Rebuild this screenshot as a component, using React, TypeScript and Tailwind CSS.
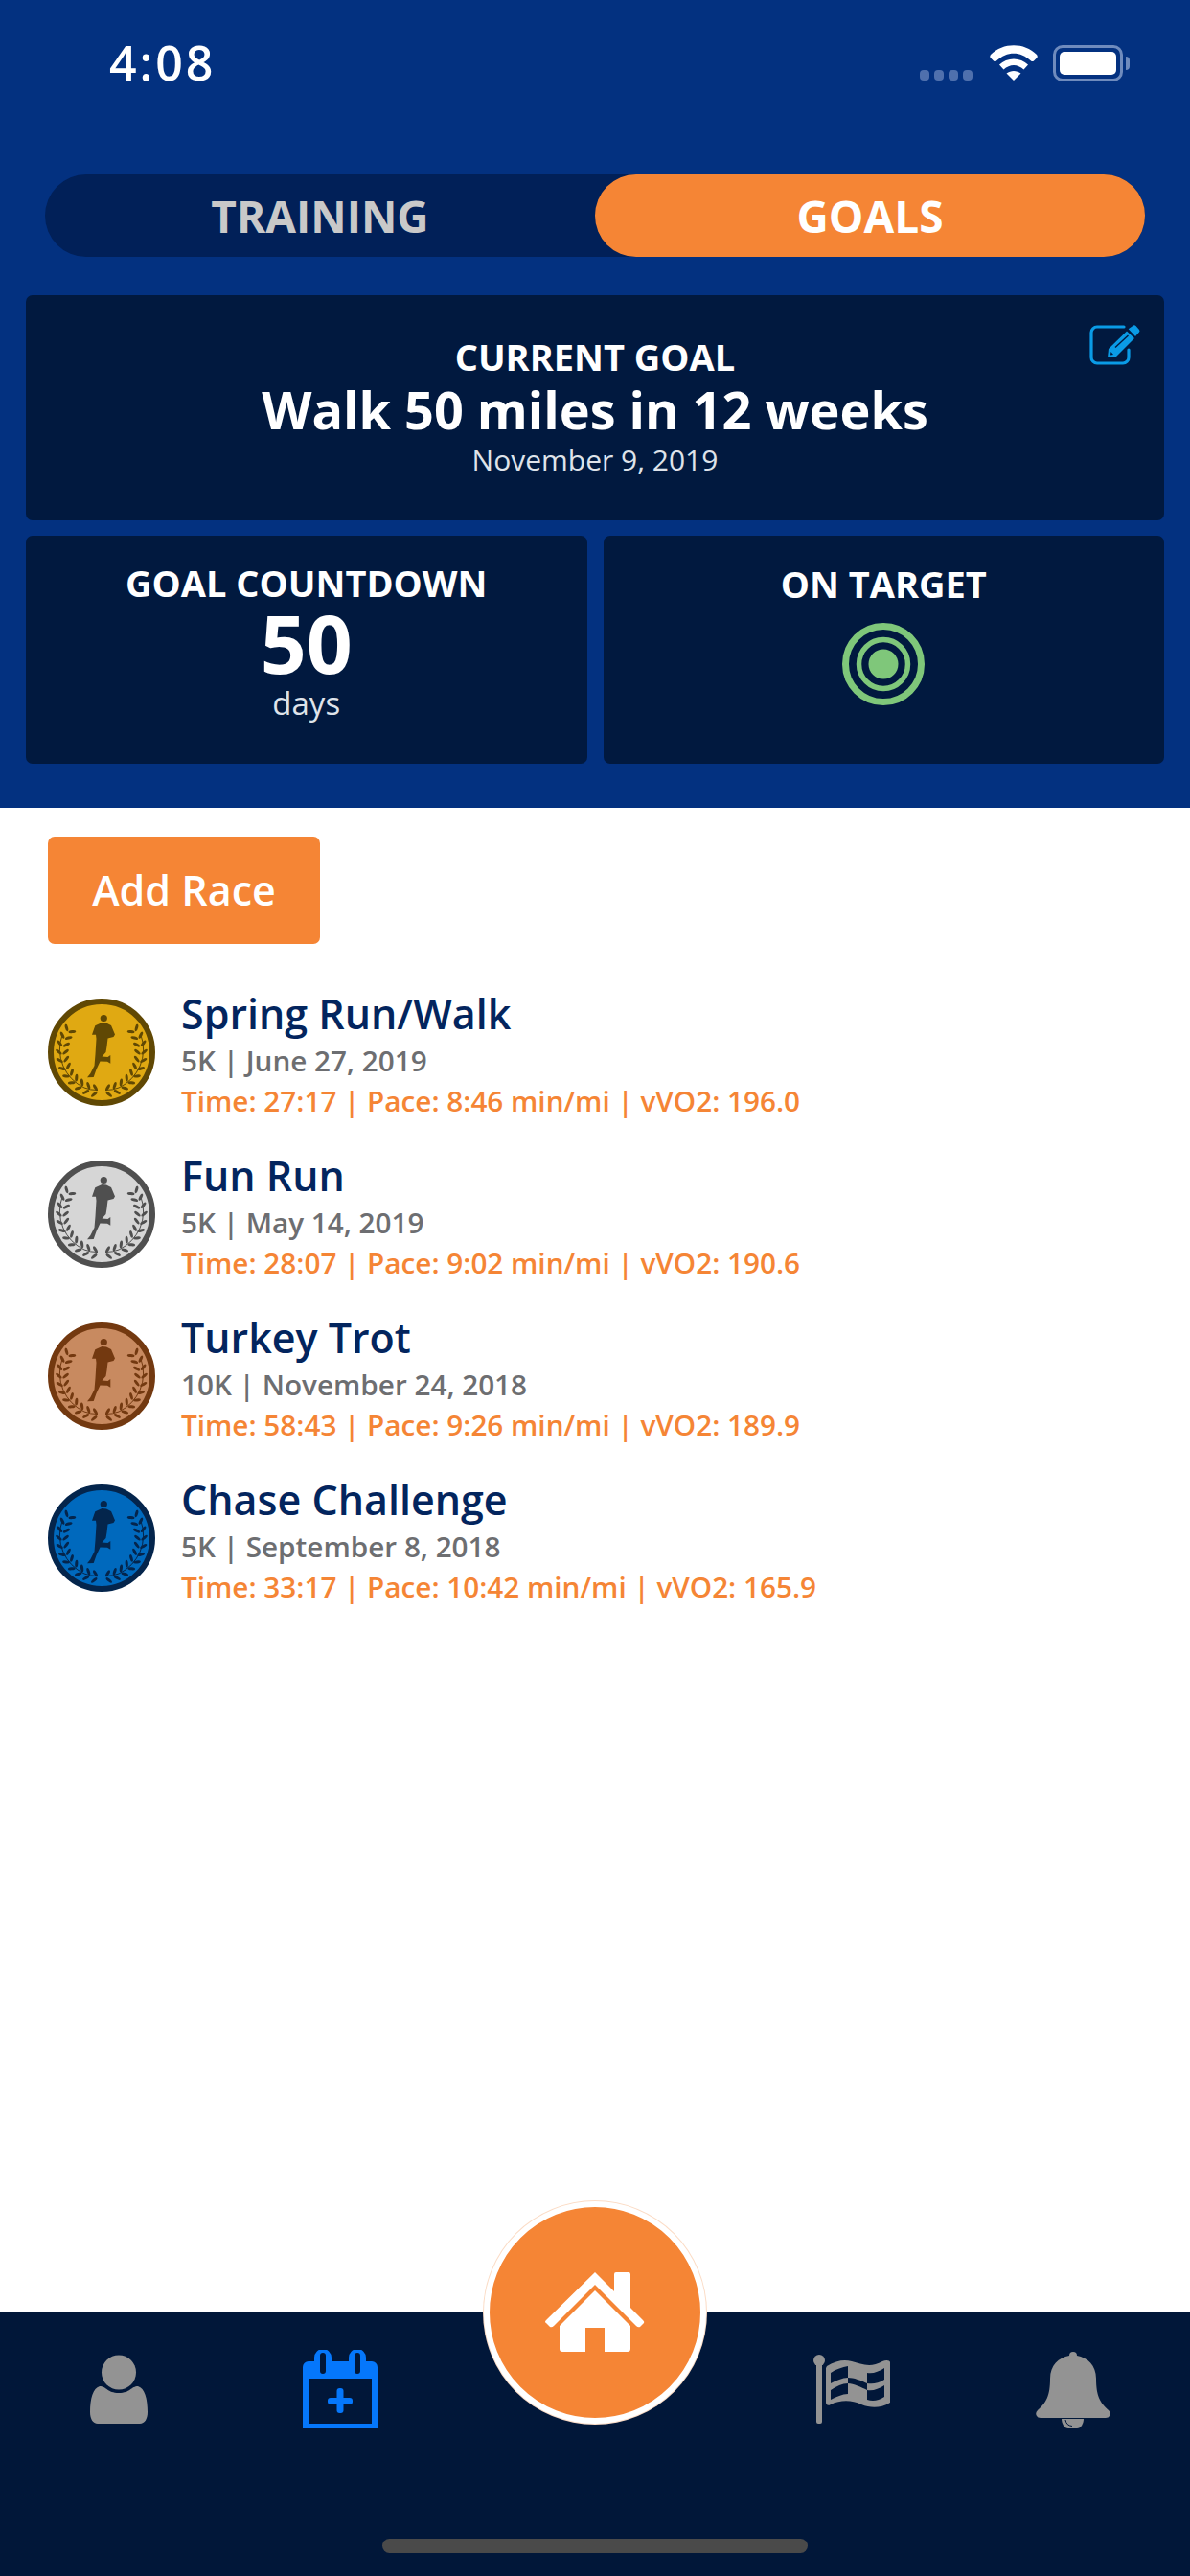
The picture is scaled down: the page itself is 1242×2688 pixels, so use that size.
import React from "react";

const font = { fontFamily: '"Open Sans", "Noto Sans", sans-serif' };

function laurel() {
  const out: React.ReactNode[] = [];
  for (let i = 0; i < 11; i++) {
    const a = ((170 - i * 11.5) * Math.PI) / 180;
    const base = 41;
    const s = Math.sin(a);
    const c = Math.cos(a);
    const cx = 56 - base * s;
    const cy = 56 - base * c;
    const dir = 90 - (a * 180) / Math.PI + 180;
    const ax = cx - 3.6 * s;
    const ay = cy - 3.6 * c;
    const bx = cx + 3.6 * s;
    const by = cy + 3.6 * c;
    out.push(<ellipse key={`a${i}`} cx={ax} cy={ay} rx="3.9" ry="1.55" transform={`rotate(${dir + 40} ${ax} ${ay})`} />);
    out.push(<ellipse key={`b${i}`} cx={bx} cy={by} rx="3.9" ry="1.55" transform={`rotate(${dir - 40} ${bx} ${by})`} />);
  }
  return out;
}

function Medal({ fill, dark }: { fill: string; dark: string }) {
  return (
    <svg width="112" height="112" viewBox="0 0 112 112" className="shrink-0">
      <circle cx="56" cy="56" r="53" fill={fill} stroke={dark} strokeWidth="6" />
      <g fill={dark}>
        <circle cx="58.3" cy="20.5" r="3.6" />
        <path d="M56.5 25 L61 25.5 L66 28 L70 37.5 L68.5 40 L62.5 41.5 L61.5 50 L60.5 56 L56.5 60.5 L62.5 61 L65.3 59 L65.3 67.7 L62 65.7 L54.5 65.5 L50.5 74 L47.7 82 L41 82.3 L44.3 78.3 L48.5 70 L49.5 58.3 L50.5 42 L50 37.7 L46 37.7 L49.3 28.3 Z" />
        <g>{laurel()}</g>
        <g transform="matrix(-1 0 0 1 112 0)">{laurel()}</g>
      </g>
      <g stroke={dark} strokeWidth="1" fill="none">
        <path d="M15 38 A44 44 0 0 0 38 93 Q44 95.5 52 95.5" />
        <path d="M97 38 A44 44 0 0 1 74 93 Q68 95.5 60 95.5" />
      </g>
    </svg>
  );
}

function Race({ medal, dark, name, sub, stats }: { medal: string; dark: string; name: string; sub: string; stats: string }) {
  return (
    <div className="flex h-[169px] items-start gap-[27px]">
      <Medal fill={medal} dark={dark} />
      <div className="-mt-[13px] flex flex-col">
        <div className="text-[43px] leading-[58px] font-semibold text-[#03255e]">{name}</div>
        <div className="-mt-[1px] text-[29.7px] leading-[42px] font-semibold text-[#6d6e71]">{sub}</div>
        <div className="text-[29.7px] leading-[42px] font-semibold text-[#f58535]">{stats}</div>
      </div>
    </div>
  );
}

function Wifi() {
  return (
    <svg width="50" height="38" viewBox="0 0 50 38" fill="#fff">
      <path d="M1 10 C14 -3 36 -3 49 10 Q50.5 12 49 13.5 L46 16.5 Q44.5 17.5 43 16.5 C32 6 18 6 7 16.5 Q5.5 17.5 4 16.5 L1 13.5 Q-0.5 12 1 10 Z" />
      <path d="M10 20.5 C18 12.5 32 12.5 40 20.5 L35.5 25.5 C29 19.5 21 19.5 14.5 25.5 Z" />
      <path d="M25 37 L17.5 29.5 C22 26 28 26 32.5 29.5 Z" />
    </svg>
  );
}

function Battery() {
  return (
    <div className="flex items-center gap-[3px]">
      <div className="h-[38px] w-[73px] rounded-[10px] border-[3px] border-[#6f8bbd] p-[4px]">
        <div className="h-full w-full rounded-[5px] bg-white" />
      </div>
      <div className="h-[14px] w-[4px] rounded-r-full bg-[#6f8bbd]" />
    </div>
  );
}

function Edit() {
  return (
    <svg width="53" height="42" viewBox="0 0 53 42" fill="none" className="absolute top-[31px] right-[25px]">
      <path d="M36 2 H8 A6 6 0 0 0 2 8 V34 A6 6 0 0 0 8 40 H35 A6 6 0 0 0 41 34 V26" stroke="#0a9be6" strokeWidth="3.2" strokeLinecap="round" />
      <path d="M19 34 L20 25 L39 6.5 L47 14 L28 33 Z" fill="#0a9be6" />
      <path d="M40.7 4.3 L46 0.5 Q47.5 0 48.5 1 L52 5 Q53 6.5 52 7.5 L48 12 Z" fill="#0a9be6" />
      <path d="M27 23.5 L40.5 11" stroke="#01193f" strokeWidth="1.4" />
      <path d="M22.5 28 L25 31 L22 31.5 Z" fill="#01193f" />
    </svg>
  );
}

function Target() {
  return (
    <svg width="86" height="86" viewBox="0 0 86 86" className="mx-auto mt-[16px]">
      <circle cx="43" cy="43" r="39.5" fill="none" stroke="#7fc77a" strokeWidth="7" />
      <circle cx="43" cy="43" r="25.5" fill="none" stroke="#7fc77a" strokeWidth="5.5" />
      <circle cx="43" cy="43" r="15.5" fill="#7fc77a" />
    </svg>
  );
}

function Person() {
  return (
    <svg width="60" height="72" viewBox="0 0 60 72" fill="#939393">
      <ellipse cx="30" cy="18.5" rx="18" ry="18" />
      <path d="M10 33 C17 33 18 40 30 40 C42 40 43 33 50 33 C57 35 60 46 60 60 C60 67 57 72 52 72 H8 C3 72 0 67 0 60 C0 46 3 35 10 33 Z" />
    </svg>
  );
}

function Calendar() {
  return (
    <svg width="78" height="82" viewBox="0 0 78 82">
      <path fillRule="evenodd" fill="#0577fb" d="M6 12 H12 V8 A8 8 0 0 1 30 8 V12 H48 V8 A8 8 0 0 1 66 8 V12 H72 A6 6 0 0 1 78 18 V82 H0 V18 A6 6 0 0 1 6 12 Z M6 30 V77 H72 V30 Z M18 6 V22 A2 2 0 0 0 24 22 V6 A2 2 0 0 0 18 6 Z M54 6 V22 A2 2 0 0 0 60 22 V6 A2 2 0 0 0 54 6 Z" />
      <rect x="26" y="50" width="26" height="7" rx="3" fill="#0577fb" />
      <rect x="35.5" y="40" width="7" height="26" rx="3" fill="#0577fb" />
    </svg>
  );
}

function Flag() {
  return (
    <svg width="80" height="72" viewBox="0 0 80 72" fill="#939393">
      <circle cx="6" cy="6" r="6" />
      <rect x="3" y="6" width="6" height="66" rx="2" />
      <path fillRule="evenodd" d="M14 12 C24 6 32 5 40 7 C50 10 60 14 72 7 C76 5 80 6 80 8 V50 C70 56 60 56 50 52 C40 47 28 47 18 52 C15 54 13 52 13 50 V14 Z M18 19 V30 C24 27 30 24 36 24 V12 C30 13 24 15 18 19 Z M18 37 V47 C24 44 30 41 36 41 V30 C30 30 24 33 18 37 Z M56 19 V30 C62 31 68 30 74 26 V14 C68 18 62 20 56 19 Z M56 37 V47 C62 49 68 48 74 44 V32 C68 36 62 38 56 37 Z" />
      <path d="M36 24 C42 24 50 27 56 30 V37 C50 34 42 30 36 30 Z" fill="#011739" />
    </svg>
  );
}

function Bell() {
  return (
    <svg width="78" height="82" viewBox="0 0 78 82" fill="#939393">
      <path d="M35 6 A4 4 0 0 1 43 6 C54 8 63 16 63 30 C63 48 67 55 76 63 Q79 66 77 69 Q76 71 73 71 H5 Q2 71 1 69 Q-1 66 2 63 C11 55 15 48 15 30 C15 16 24 8 35 6 Z" />
      <path d="M27 72 H50 C50 77 47 82 43 82 H34 C30 82 27 77 27 72 Z" />
      <path d="M31 73 Q32 79 38 79.5" fill="none" stroke="#011739" strokeWidth="1" />
    </svg>
  );
}

function Home() {
  return (
    <svg width="106" height="84" viewBox="0 0 106 84" fill="#fff">
      <path d="M53 0 L73 20 V2 A2 2 0 0 1 75 0 H88 A2 2 0 0 1 90 2 V37 L103 50 Q105 52 104 53 L100 57 Q98 58 96 56 L53 13 L10 56 Q8 58 6 57 L2 53 Q0 52 2 50 Z" />
      <path d="M53 19 L90 56 V80 A3 3 0 0 1 87 83 H63 V58 H43 V83 H19 A3 3 0 0 1 16 80 V56 Z" />
    </svg>
  );
}

export default function App() {
  return (
    <div className="relative flex h-[2688px] w-[1242px] flex-col overflow-hidden bg-white" style={font}>
      <header className="h-[843px] shrink-0 bg-[#033180] px-[27px]">
        <div className="flex h-[182px] items-start justify-between">
          <div className="mt-[31px] ml-[87px] text-[50px] leading-[68px] font-semibold tracking-[3px] text-white">4:08</div>
          <div className="mt-[47px] mr-[36px] flex items-start gap-[16px]">
            <div className="mt-[26px] mr-[2px] flex gap-[5px]">
              <span className="h-[11px] w-[10px] rounded-[4px] bg-[#4f70ad]" />
              <span className="h-[11px] w-[10px] rounded-[4px] bg-[#4f70ad]" />
              <span className="h-[11px] w-[10px] rounded-[4px] bg-[#4f70ad]" />
              <span className="h-[11px] w-[10px] rounded-[4px] bg-[#4f70ad]" />
            </div>
            <Wifi />
            <Battery />
          </div>
        </div>
        <div className="mx-[20px] flex h-[86px] rounded-full bg-[#012058] text-[46px] font-bold">
          <div className="flex w-[574px] items-center justify-center text-[#c9c9c9]">TRAINING</div>
          <div className="flex flex-1 items-center justify-center rounded-full bg-[#f58535] text-white">GOALS</div>
        </div>
        <section className="relative mt-[40px] flex h-[235px] flex-col items-center rounded-[7px] bg-[#01193f] pt-[39px] text-white">
          <Edit />
          <div className="text-[38px] leading-[50px] font-bold">CURRENT GOAL</div>
          <div className="-mt-[3px] text-[54px] leading-[66px] font-bold">Walk 50 miles in 12 weeks</div>
          <div className="text-[30px] leading-[40px] font-normal text-[#dfe3ea]">November 9, 2019</div>
        </section>
        <div className="mt-[16px] grid grid-cols-2 gap-[17px]">
          <section className="flex h-[238px] flex-col items-center rounded-[7px] bg-[#01193f] pt-[24px] text-white">
            <div className="text-[38px] leading-[50px] font-bold">GOAL COUNTDOWN</div>
            <div className="-mt-[4px] text-[84px] leading-[84px] font-bold">50</div>
            <div className="mt-[1px] text-[33px] leading-[40px] text-[#dfe3ea]">days</div>
          </section>
          <section className="h-[238px] rounded-[7px] bg-[#01193f] pt-[25px] text-center text-white">
            <div className="text-[38px] leading-[50px] font-bold">ON TARGET</div>
            <Target />
          </section>
        </div>
      </header>
      <main className="flex-1 px-[50px] pt-[30px]">
        <button className="flex h-[112px] w-[284px] items-center justify-center rounded-[7px] bg-[#f58535] text-[43px] font-semibold text-white">Add Race</button>
        <div className="mt-[57px] flex flex-col">
          <Race medal="#e0a912" dark="#604804" name="Spring Run/Walk" sub="5K | June 27, 2019" stats="Time: 27:17 | Pace: 8:46 min/mi | vVO2: 196.0" />
          <Race medal="#d6d6d6" dark="#4f4f4f" name="Fun Run" sub="5K | May 14, 2019" stats="Time: 28:07 | Pace: 9:02 min/mi | vVO2: 190.6" />
          <Race medal="#c88a60" dark="#733910" name="Turkey Trot" sub="10K | November 24, 2018" stats="Time: 58:43 | Pace: 9:26 min/mi | vVO2: 189.9" />
          <Race medal="#0069bd" dark="#04254c" name="Chase Challenge" sub="5K | September 8, 2018" stats="Time: 33:17 | Pace: 10:42 min/mi | vVO2: 165.9" />
        </div>
      </main>
      <footer className="relative h-[275px] shrink-0 bg-[#011739]">
        <div className="flex h-[82px] mt-[39px] items-center">
          <div className="flex w-[248px] justify-center"><Person /></div>
          <div className="flex w-[214px] justify-center"><Calendar /></div>
          <div className="w-[310px]" />
          <div className="flex w-[234px] justify-center"><Flag /></div>
          <div className="flex w-[228px] justify-center"><Bell /></div>
        </div>
        <div className="absolute -top-[116px] left-[505px] flex h-[232px] w-[232px] items-center justify-center rounded-full border-[6px] border-white bg-[#f58535] shadow-[0_0_0_1px_#fbdcc6]">
          <Home />
        </div>
        <div className="absolute top-[236px] left-[399px] h-[15px] w-[444px] rounded-full bg-[#4a4a4a]" />
      </footer>
    </div>
  );
}
